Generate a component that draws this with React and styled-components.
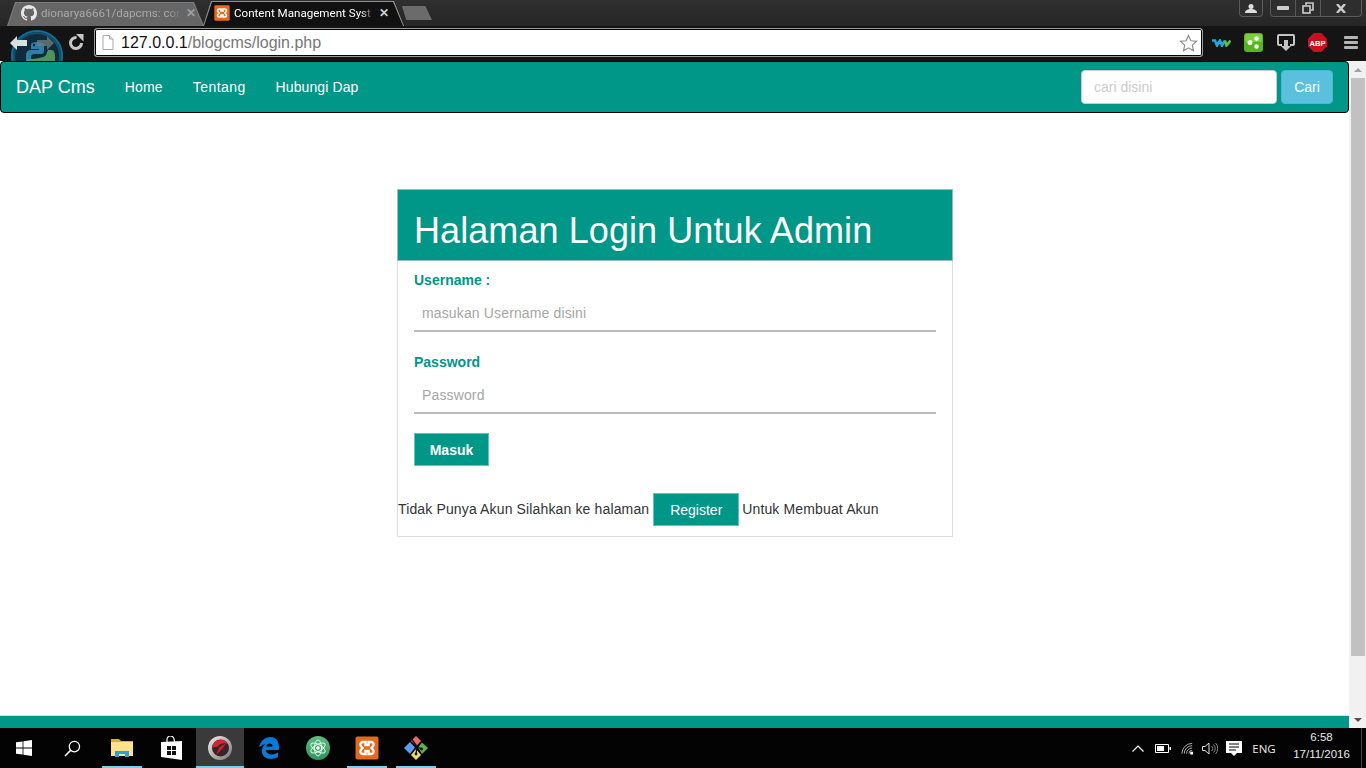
import React from "react";
import styled, { createGlobalStyle } from "styled-components";

const GlobalStyle = createGlobalStyle`
  html, body {
    margin: 0;
    padding: 0;
    height: 100%;
    overflow: hidden;
    background: #fff;
    font-family: "Liberation Sans", Arial, sans-serif;
  }
  * { box-sizing: border-box; }
`;

const Screen = styled.div`
  width: 1366px;
  height: 768px;
  display: flex;
  flex-direction: column;
  overflow: hidden;
`;

/* ---------- browser chrome ---------- */
const TabStrip = styled.div`
  height: 26px;
  background: linear-gradient(#2f2f2f, #262626);
  display: flex;
  align-items: flex-end;
  justify-content: space-between;
  padding-left: 7px;
`;

const Tabs = styled.div`
  display: flex;
  align-items: flex-end;
`;

// outer layer is the tab's light edge, ::before is its fill
const Tab = styled.div`
  position: relative;
  width: ${(p) => (p.$active ? "201px" : "197px")};
  height: ${(p) => (p.$active ? "25px" : "24px")};
  margin-left: ${(p) => (p.$active ? "-1px" : "0")};
  background: ${(p) => (p.$active ? "#8f8f8f" : "#7d7d7d")};
  clip-path: polygon(8px 0, calc(100% - 10px) 0, 100% 100%, 0 100%);
  display: flex;
  align-items: center;
  padding: ${(p) => (p.$active ? "0 13px 1px 11px" : "0 7px 2px 14px")};
  gap: 4px;
  color: ${(p) => (p.$active ? "#fff" : "#a9a9a9")};
  white-space: nowrap;
  z-index: ${(p) => (p.$active ? 1 : 0)};
  &::before {
    content: "";
    position: absolute;
    inset: 1px 1px 0 1px;
    background: ${(p) => (p.$active ? "#111" : "#666")};
    clip-path: polygon(8px 0, calc(100% - 10px) 0, 100% 100%, 0 100%);
  }
  & > * { position: relative; flex-shrink: 0; }
`;

const TabTitle = styled.span`
  width: 141px;
  font-family: Roboto, "Liberation Sans", sans-serif;
  font-size: 11.6px;
  mask-image: linear-gradient(to right, #000 127px, transparent 141px);
`;

const TabClose = styled.span`
  width: 12px;
  color: ${(p) => (p.$active ? "#cfcfcf" : "#a0a0a0")};
  font-size: 12px;
  font-weight: bold;
`;

const NewTab = styled.div`
  width: 30px;
  height: 14px;
  margin: 0 0 6px -2px;
  background: #6b6b6b;
  clip-path: polygon(0 0, 78% 0, 100% 100%, 14% 100%);
`;

const WindowControls = styled.div`
  align-self: flex-start;
  display: flex;
  gap: 7px;
  padding-right: 4px;
`;

const ControlGroup = styled.div`
  height: 17px;
  display: flex;
  border: 1px solid #5a5a5a;
  border-top: 0;
  border-radius: 0 0 4px 4px;
  background: #2e2e2e;
`;

const ControlCell = styled.div`
  width: ${(p) => p.$w}px;
  display: flex;
  align-items: center;
  justify-content: center;
  border-left: ${(p) => (p.$sep ? "1px solid #5a5a5a" : "0")};
`;

const Toolbar = styled.div`
  height: 35px;
  background: #141414;
  display: flex;
  align-items: center;
  position: relative;
  padding-left: 94px;
  overflow: hidden;
`;

const ThemeBadge = styled.div`
  position: absolute;
  left: 7px;
  top: 0;
  display: flex;
`;

const NavArrows = styled.div`
  position: absolute;
  left: 8px;
  top: 8px;
  display: flex;
  gap: 8px;
`;

const Reload = styled.svg`
  position: absolute;
  left: 67px;
  top: 8px;
`;

const AddressBar = styled.div`
  width: 1109px;
  height: 29px;
  flex-shrink: 0;
  background: #fff;
  border: 1px solid #9a9a9a;
  border-radius: 3px;
  box-shadow: inset 0 0 0 1px #000;
  display: flex;
  align-items: center;
  padding: 0 4px 0 7px;
  margin-top: -2px;
`;

const Url = styled.span`
  flex: 1;
  margin-left: 7px;
  color: #777;
  font-size: 16px;
`;

const UrlHost = styled.span`
  color: #111;
`;

const Extensions = styled.div`
  display: flex;
  align-items: center;
  margin-top: -2px;
`;

const ExtensionSlot = styled.div`
  display: flex;
  margin-left: ${(p) => p.$ml}px;
`;

/* ---------- page ---------- */
const Viewport = styled.div`
  flex: 1;
  display: flex;
  min-height: 0;
  background: #fff;
`;

const Page = styled.div`
  flex: 1;
  display: flex;
  flex-direction: column;
  min-width: 0;
`;

const Navbar = styled.nav`
  height: 52px;
  background: #009688;
  border: 1px solid #000;
  border-radius: 4px;
  display: flex;
  align-items: center;
  padding: 0 15px;
  color: #fff;
`;

const Brand = styled.a`
  font-size: 18px;
  margin-right: 15px;
`;

const NavLink = styled.a`
  font-size: 14px;
  padding: 0 15px;
  letter-spacing: ${(p) => p.$ls || 0.1}px;
`;

const SearchForm = styled.form`
  margin-left: auto;
  display: flex;
  gap: 4px;
`;

const SearchInput = styled.input`
  width: 196px;
  height: 34px;
  border: 1px solid #ccc;
  border-radius: 4px;
  padding: 6px 12px;
  font: 14px "Liberation Sans", sans-serif;
  background: #fff;
  &::placeholder { color: #ccc; opacity: 1; }
`;

const SearchButton = styled.button`
  width: 52px;
  height: 34px;
  background: #5bc0de;
  border: 1px solid #46b8da;
  border-radius: 4px;
  color: #fff;
  font: 14px "Liberation Sans", sans-serif;
  padding: 0;
`;

const Content = styled.main`
  flex: 1;
  display: flex;
  justify-content: center;
  align-items: flex-start;
  padding: 76px 0 0 1px;
`;

const Panel = styled.section`
  width: 556px;
  height: 348px;
  border: 1px solid #ddd;
  color: #333;
  font-size: 14px;
`;

const PanelHeading = styled.div`
  height: 72px;
  margin: -1px -1px 0;
  background: #009688;
  border: 1px solid #9cbcb8;
  padding: 0 16px;
`;

const Title = styled.h1`
  margin: 0;
  padding-top: 21px;
  font-size: 36px;
  font-weight: 400;
  line-height: 40px;
  letter-spacing: 0.08px;
  color: #fff;
`;

const LoginForm = styled.form`
  padding: 9px 16px 0;
`;

const FieldLabel = styled.label`
  display: block;
  height: 20px;
  line-height: 20px;
  margin-bottom: 6px;
  font-weight: bold;
  color: #009688;
`;

const FieldInput = styled.input`
  display: block;
  width: 100%;
  height: 36px;
  margin-bottom: ${(p) => p.$mb}px;
  border: 0;
  border-bottom: 2px solid #bbb;
  padding: 0 8px;
  outline: none;
  font: 14px "Liberation Sans", sans-serif;
  letter-spacing: 0.14px;
  background: #fff;
  &::placeholder { color: #a6a6a6; opacity: 1; }
`;

const TealButton = styled.button`
  width: ${(p) => p.$w}px;
  height: 33px;
  margin-right: ${(p) => p.$mr || 0}px;
  background: #009688;
  border: 1px solid #5fc4ba;
  color: #fff;
  padding: 0;
  font: ${(p) => (p.$bold ? "bold " : "")}14px "Liberation Sans", sans-serif;
`;

const RegisterRow = styled.div`
  display: flex;
  align-items: flex-start;
  gap: 4px;
  margin-top: 27px;
  line-height: 32px;
  letter-spacing: 0.14px;
`;

const Footer = styled.footer`
  height: 13px;
  background: #009688;
  border-top: 1px solid #d8dcdc;
`;

const Scrollbar = styled.div`
  width: 17px;
  background: #f1f1f1;
  display: flex;
  flex-direction: column;
  align-items: flex-end;
`;

const ScrollArrow = styled.div`
  width: 17px;
  height: 17px;
  display: flex;
  align-items: center;
  justify-content: center;
  &::before {
    content: "";
    border-left: 4px solid transparent;
    border-right: 4px solid transparent;
    ${(p) => (p.$down ? "border-top: 4px solid #505050;" : "border-bottom: 4px solid #a3a3a3;")}
  }
`;

const ScrollThumb = styled.div`
  width: 14px;
  margin-right: 1px;
  height: 578px;
  background: #c1c1c1;
`;

const ScrollTrack = styled.div`
  flex: 1;
`;

/* ---------- windows taskbar ---------- */
const Taskbar = styled.div`
  height: 40px;
  background: #030303;
  display: flex;
  align-items: stretch;
  gap: 1px;
  color: #fff;
`;

const TaskButton = styled.div`
  position: relative;
  width: ${(p) => p.$w || 48}px;
  display: flex;
  align-items: center;
  justify-content: center;
  background: ${(p) => (p.$active ? "#3a3a3a" : "transparent")};
  ${(p) =>
    p.$open &&
    `&::after {
      content: "";
      position: absolute;
      bottom: 0;
      left: ${p.$active ? 0 : 4}px;
      right: ${p.$active ? 0 : 4}px;
      height: 2px;
      background: #76cfee;
    }`}
`;

const Tray = styled.div`
  margin-left: auto;
  display: flex;
  align-items: center;
`;

const TrayIcon = styled.div`
  width: ${(p) => p.$w}px;
  display: flex;
  justify-content: center;
`;

const Lang = styled.span`
  width: 38px;
  text-align: center;
  font-family: "Open Sans", sans-serif;
  font-size: 11.5px;
  color: #e8e8e8;
`;

const Clock = styled.div`
  width: 78px;
  padding: 0 1px 4px 0;
  text-align: center;
  font-size: 11.5px;
  line-height: 17px;
  color: #e8e8e8;
`;

const ShowDesktop = styled.div`
  width: 1px;
  height: 100%;
  background: #444;
  margin-right: 4px;
`;

const Icons = {
  Github: () => (
    <svg width="16" height="16" viewBox="0 0 16 16" fill="#e8e8e8">
      <path d="M8 0C3.58 0 0 3.58 0 8c0 3.54 2.29 6.53 5.47 7.59.4.07.55-.17.55-.38 0-.19-.01-.82-.01-1.49-2.01.37-2.53-.49-2.69-.94-.09-.23-.48-.94-.82-1.13-.28-.15-.68-.52-.01-.53.63-.01 1.08.58 1.23.82.72 1.21 1.87.87 2.33.66.07-.52.28-.87.51-1.07-1.78-.2-3.64-.89-3.64-3.95 0-.87.31-1.59.82-2.15-.08-.2-.36-1.02.08-2.12 0 0 .67-.21 2.2.82.64-.18 1.32-.27 2-.27s1.36.09 2 .27c1.53-1.04 2.2-.82 2.2-.82.44 1.1.16 1.92.08 2.12.51.56.82 1.27.82 2.15 0 3.07-1.87 3.75-3.65 3.95.29.25.54.73.54 1.48 0 1.07-.01 1.93-.01 2.2 0 .21.15.46.55.38A8.01 8.01 0 0016 8c0-4.42-3.58-8-8-8z" />
    </svg>
  ),
  Xampp: ({ size = 16 }) => (
    <svg width={size} height={size} viewBox="0 0 24 24">
      <rect x="0.5" y="0.5" width="23" height="23" rx="2" fill="#e56a1d" />
      <path d="M8 6h2.5v3h3V6H16a2.5 2.5 0 012 4.2L16.5 12l1.5 1.8A2.5 2.5 0 0116 18h-2.5v-3h-3v3H8a2.5 2.5 0 01-2-4.2L7.5 12 6 10.2A2.5 2.5 0 018 6z" fill="none" stroke="#fff" strokeWidth="2.4" />
    </svg>
  ),
  Python: () => (
    <svg width="62" height="35" viewBox="0 0 62 35">
      <circle cx="30" cy="30" r="25" fill="#102c3c" stroke="#0d6f9c" strokeWidth="2" />
      <circle cx="30" cy="30" r="23" fill="none" stroke="#14506e" strokeWidth="2" />
      <path d="M24 19c0-2 2-3 6-3s7 1 7 3v6c0 2-1 3-3 3h-6c-3 0-4 1-4 3v4h-5v-5c0-3 1-6 5-6h8v-1h-8z" fill="#2f7ea8" />
      <circle cx="27" cy="19" r="1.2" fill="#102c3c" />
      <path d="M41 24h3c3 0 4 3 4 6v5H20v-2c4 0 9 0 12-1s6-1 7-3c1-2 1-3 2-5z" fill="#4f9360" />
    </svg>
  ),
  Back: () => (
    <svg width="20" height="18" viewBox="0 0 20 18">
      <path d="M9 2L2 9l7 7v-4h10V6H9z" fill="#d8e0e0" />
    </svg>
  ),
  Forward: () => (
    <svg width="20" height="18" viewBox="0 0 20 18">
      <path d="M11 2l7 7-7 7v-4H1V6h10z" fill="#6a7a80" fillOpacity="0.8" />
    </svg>
  ),
  Page: () => (
    <svg width="12" height="15" viewBox="0 0 12 15">
      <path d="M1 .5h6.5L11 4v10.500H1z" fill="#fff" stroke="#aaa" />
      <path d="M7.5.5V4H11" fill="#ddd" stroke="#aaa" />
    </svg>
  ),
  Star: () => (
    <svg width="19" height="18" viewBox="0 0 20 19">
      <path d="M10 1.500l2.500 5.600 6 .6-4.500 4 1.300 6L10 14.600l-5.300 3.100 1.300-6-4.500-4 6-.6z" fill="#fff" stroke="#8a8a8a" strokeWidth="1.2" />
    </svg>
  ),
  Windows: () => (
    <svg width="16" height="16" viewBox="0 0 16 16" fill="#fff">
      <path d="M0 2.3L6.6 1.4V7.6H0zM7.4 1.3L16 0v7.6H7.4zM0 8.4h6.6v6.2L0 13.7zM7.4 8.4H16V16l-8.6-1.3z" />
    </svg>
  ),
  Search: () => (
    <svg width="17" height="17" viewBox="0 0 18 18" fill="none" stroke="#fff" strokeWidth="1.3">
      <circle cx="11" cy="7" r="5.5" />
      <path d="M7 11l-6 6" strokeWidth="1.6" />
    </svg>
  ),
  Explorer: () => (
    <svg width="22" height="18" viewBox="0 0 22 18">
      <path d="M0 0h8l2 2h12v3H0z" fill="#e2ac2c" />
      <path d="M0 3h22v14H0z" fill="#fce38c" />
      <path d="M4 12h14v6h-4v-3H8v3H4z" fill="#29a3df" />
    </svg>
  ),
  Store: () => (
    <svg width="21" height="24" viewBox="0 0 21 24">
      <path d="M6 6V4a3.5 3.5 0 017-1l.6 3" fill="none" stroke="#fff" strokeWidth="1.2" />
      <path d="M0 6l21-1v19L0 21z" fill="#fff" />
      <path d="M6 10h4v4H6zM11 10h4v4h-4zM6 15h4v4H6zM11 15h4v4h-4z" fill="#111" />
    </svg>
  ),
  Maxthon: () => (
    <svg width="24" height="24" viewBox="0 0 24 24">
      <defs>
        <linearGradient id="maxRing" x1="0" y1="0" x2="1" y2="1">
          <stop offset="0" stopColor="#f0f0f0" />
          <stop offset="1" stopColor="#777" />
        </linearGradient>
      </defs>
      <circle cx="12" cy="12" r="12" fill="url(#maxRing)" />
      <circle cx="12.5" cy="12" r="8.5" fill="#3b2226" />
      <path d="M4.2 11.5A8.5 8.5 0 0120 8c-4-1.500-8-.5-10.500 2.500z" fill="#d22630" />
      <path d="M8 19l3.500-8L18 7.500l-4 5.500z" fill="#c9242e" />
    </svg>
  ),
  Edge: () => (
    <svg width="20" height="22" viewBox="0 0 20 22">
      <path
        fillRule="evenodd"
        fill="#0a78d7"
        d="M0 10.500C1.500 4 6 0 11.500 0 17 0 20 4.500 20 10v3H7c.3 4.500 6.500 6 12 2.500V20c-6 3.500-16 2.500-16.200-6 0-2.500 1.200-5 3.700-7C3.500 7.500 1.500 9 0 10.500zM7.200 9.500h6.400c-.1-4-5.600-4-6.400 0z"
      />
    </svg>
  ),
  Atom: () => (
    <svg width="24" height="24" viewBox="0 0 24 24" fill="none" stroke="#e4f4e8" strokeWidth="1">
      <defs>
        <linearGradient id="atomBg" x1="0" y1="0" x2="0" y2="1">
          <stop offset="0" stopColor="#5fbd7f" />
          <stop offset="1" stopColor="#2b9560" />
        </linearGradient>
      </defs>
      <circle cx="12" cy="12" r="12" fill="url(#atomBg)" stroke="none" />
      <ellipse cx="12" cy="12" rx="8" ry="3.5" transform="rotate(30 12 12)" />
      <ellipse cx="12" cy="12" rx="8" ry="3.5" transform="rotate(-30 12 12)" />
      <ellipse cx="12" cy="12" rx="8" ry="3.5" transform="rotate(90 12 12)" />
      <circle cx="12" cy="12" r="1.4" fill="#e4f4e8" />
    </svg>
  ),
  Git: () => (
    <svg width="24" height="24" viewBox="0 0 24 24">
      <path d="M7 5l5-5 5 5-4.500 5z" fill="#ec6a6a" />
      <path d="M14 11.500l4-5 6 5.500-6 6z" fill="#62b04e" />
      <path d="M0 12l6-6 5 5.500-5 6.500z" fill="#5b9cf0" />
      <path d="M7 19l5-6 5 6-5 5z" fill="#f3dc62" />
      <path d="M7.500 3l5.500 7.500M13 10.500l-1 8M13 10.500l4.500 2.500" stroke="#111" strokeWidth="1.3" fill="none" />
      <circle cx="12" cy="18" r="1.400" fill="#111" />
      <circle cx="17.500" cy="13" r="1.400" fill="#111" />
    </svg>
  ),
};

const App = () => {
  return (
    <React.Fragment>
      <GlobalStyle />
      <Screen>
        <TabStrip>
          <Tabs>
            <Tab>
              <Icons.Github />
              <TabTitle>dionarya6661/dapcms: cor</TabTitle>
              <TabClose>✕</TabClose>
            </Tab>
            <Tab $active>
              <Icons.Xampp />
              <TabTitle>Content Management Syst</TabTitle>
              <TabClose $active>✕</TabClose>
            </Tab>
            <NewTab />
          </Tabs>
          <WindowControls>
            <ControlGroup>
              <ControlCell $w={22}>
                <svg width="12" height="9" viewBox="0 0 12 9" fill="#ddd">
                  <circle cx="6" cy="2.500" r="2.500" />
                  <path d="M0 9c0-3 3-4 6-4s6 1 6 4z" />
                </svg>
              </ControlCell>
            </ControlGroup>
            <ControlGroup>
              <ControlCell $w={24}>
                <svg width="12" height="4" viewBox="0 0 12 4"><rect width="12" height="4" rx="1" fill="#ccc" /></svg>
              </ControlCell>
              <ControlCell $w={25} $sep>
                <svg width="12" height="12" viewBox="0 0 12 12" fill="none" stroke="#ccc" strokeWidth="1.6">
                  <rect x="1" y="4" width="7" height="7" />
                  <path d="M4 3V1h7v7H9" />
                </svg>
              </ControlCell>
              <ControlCell $w={41} $sep>
                <svg width="10" height="9" viewBox="0 0 10 9" stroke="#ccc" strokeWidth="2.4"><path d="M1 0l8 9M9 0L1 9" /></svg>
              </ControlCell>
            </ControlGroup>
          </WindowControls>
        </TabStrip>

        <Toolbar>
          <ThemeBadge>
            <Icons.Python />
          </ThemeBadge>
          <NavArrows>
            <Icons.Back />
            <Icons.Forward />
          </NavArrows>
          <Reload width="18" height="18" viewBox="0 0 18 18">
            <path d="M14.500 9A5.500 5.500 0 119.500 3.500" fill="none" stroke="#c8c8c8" strokeWidth="3" />
            <path d="M9 0l7.500 0 0 7.500z" fill="#c8c8c8" />
          </Reload>
          <AddressBar>
            <Icons.Page />
            <Url>
              <UrlHost>127.0.0.1</UrlHost>/blogcms/login.php
            </Url>
            <Icons.Star />
          </AddressBar>
          <Extensions>
            <ExtensionSlot $ml={9}>
              <svg width="19" height="8" viewBox="0 0 19 8" fill="none" strokeWidth="2.6">
                <path d="M0 1.500h3l2 5 3-5 2 5 3-5" stroke="#1fa8d8" />
                <path d="M13 1.500l1.500 5 4-5" stroke="#5fc04a" />
              </svg>
            </ExtensionSlot>
            <ExtensionSlot $ml={13}>
              <svg width="19" height="19" viewBox="0 0 19 19">
                <rect width="19" height="19" rx="3" fill="#56b41e" />
                <rect x="1" y="1" width="17" height="8" rx="2" fill="#7ccf3c" />
                <circle cx="6" cy="9.500" r="2.500" fill="#fff" />
                <circle cx="12.500" cy="5.500" r="2.200" fill="#fff" />
                <circle cx="12.500" cy="13.500" r="2.200" fill="#fff" />
              </svg>
            </ExtensionSlot>
            <ExtensionSlot $ml={14}>
              <svg width="18" height="18" viewBox="0 0 18 18" fill="none">
                <path d="M5 11H2a1 1 0 01-1-1V2a1 1 0 011-1h14a1 1 0 011 1v8a1 1 0 01-1 1h-3" stroke="#c4c4c4" strokeWidth="2" />
                <path d="M7 6h4v6h3l-5 5-5-5h3z" fill="#c4c4c4" />
              </svg>
            </ExtensionSlot>
            <ExtensionSlot $ml={13}>
              <svg width="19" height="19" viewBox="0 0 20 20">
                <path d="M6 0h8l6 6v8l-6 6H6l-6-6V6z" fill="#c8101e" />
                <text x="10" y="13.400" textAnchor="middle" fontSize="8" fontWeight="bold" fontFamily="Liberation Sans" fill="#fff">ABP</text>
              </svg>
            </ExtensionSlot>
            <ExtensionSlot $ml={17}>
              <svg width="14" height="13" viewBox="0 0 14 13" fill="#b4b4b4">
                <rect width="14" height="3" rx="1" />
                <rect y="5" width="14" height="3" rx="1" />
                <rect y="10" width="14" height="3" rx="1" />
              </svg>
            </ExtensionSlot>
          </Extensions>
        </Toolbar>

        <Viewport>
          <Page>
            <Navbar>
              <Brand>DAP Cms</Brand>
              <NavLink $ls={0.2}>Home</NavLink>
              <NavLink $ls={0.42}>Tentang</NavLink>
              <NavLink>Hubungi Dap</NavLink>
              <SearchForm>
                <SearchInput placeholder="cari disini" />
                <SearchButton type="button">Cari</SearchButton>
              </SearchForm>
            </Navbar>
            <Content>
              <Panel>
                <PanelHeading>
                  <Title>Halaman Login Untuk Admin</Title>
                </PanelHeading>
                <LoginForm>
                  <FieldLabel>Username :</FieldLabel>
                  <FieldInput placeholder="masukan Username disini" $mb={20} />
                  <FieldLabel>Password</FieldLabel>
                  <FieldInput placeholder="Password" type="password" $mb={19} />
                  <TealButton type="button" $w={75} $bold>Masuk</TealButton>
                </LoginForm>
                <RegisterRow>
                  Tidak Punya Akun Silahkan ke halaman
                  <TealButton type="button" $w={86} $mr={-1}>Register</TealButton>
                  Untuk Membuat Akun
                </RegisterRow>
              </Panel>
            </Content>
            <Footer />
          </Page>
          <Scrollbar>
            <ScrollArrow />
            <ScrollThumb />
            <ScrollTrack />
            <ScrollArrow $down />
          </Scrollbar>
        </Viewport>

        <Taskbar>
          <TaskButton $w={47}><Icons.Windows /></TaskButton>
          <TaskButton $w={49}><Icons.Search /></TaskButton>
          <TaskButton $open><Icons.Explorer /></TaskButton>
          <TaskButton><Icons.Store /></TaskButton>
          <TaskButton $active $open><Icons.Maxthon /></TaskButton>
          <TaskButton><Icons.Edge /></TaskButton>
          <TaskButton><Icons.Atom /></TaskButton>
          <TaskButton $open><Icons.Xampp size={24} /></TaskButton>
          <TaskButton $open><Icons.Git /></TaskButton>
          <Tray>
            <TrayIcon $w={20}>
              <svg width="12" height="7" viewBox="0 0 12 7" fill="none" stroke="#fff" strokeWidth="1.2"><path d="M0.500 6.500L6 1l5.500 5.500" /></svg>
            </TrayIcon>
            <TrayIcon $w={29}>
              <svg width="16" height="9" viewBox="0 0 16 9" fill="#fff">
                <path d="M.5.5h13v8H.5z" fill="none" stroke="#fff" />
                <rect x="2" y="2" width="7" height="5" />
                <rect x="14.500" y="3" width="1.500" height="3" />
              </svg>
            </TrayIcon>
            <TrayIcon $w={20}>
              <svg width="13" height="13" viewBox="0 0 14 13" fill="none" stroke="#bbb" strokeWidth="1">
                <path d="M1 12A11 11 0 0112 1M3.500 12A8.500 8.500 0 0112 3.500M6 12a6 6 0 016-6M8.500 12A3.500 3.500 0 0112 8.500" />
                <rect x="10" y="10" width="3" height="3" fill="#fff" stroke="none" />
              </svg>
            </TrayIcon>
            <TrayIcon $w={26}>
              <svg width="17" height="13" viewBox="0 0 17 13" fill="none" stroke="#ddd" strokeWidth="1">
                <path d="M.5 4.500h2.500L7 1v11L3 8.500H.5z" />
                <path d="M9.500 4a3 3 0 010 5M11.500 2.500a5.500 5.500 0 010 8M13.500 1a8 8 0 010 11" stroke="#888" />
              </svg>
            </TrayIcon>
            <TrayIcon $w={22}>
              <svg width="16" height="15" viewBox="0 0 16 15" fill="#fff">
                <path d="M0 0h16v12h-5l-3 3-3-3H0z" />
                <path d="M3 3h10M3 6h10M3 9h7" stroke="#050505" strokeWidth="1" />
              </svg>
            </TrayIcon>
            <Lang>ENG</Lang>
            <Clock>
              6:58<br />17/11/2016
            </Clock>
            <ShowDesktop />
          </Tray>
        </Taskbar>
      </Screen>
    </React.Fragment>
  );
};

export default App;
